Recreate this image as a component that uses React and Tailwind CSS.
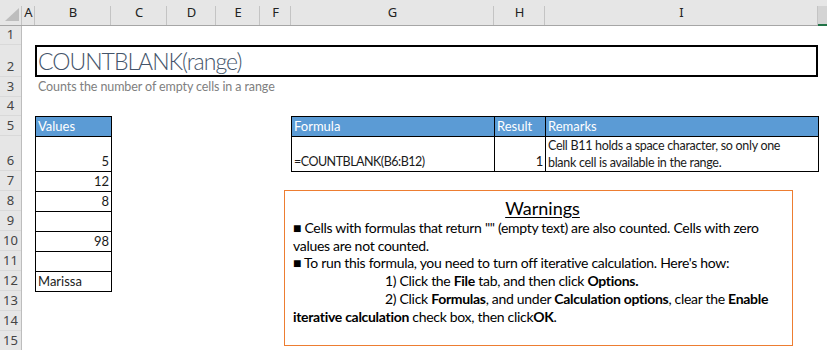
import React from 'react'

const calibri = "font-['Lato','Liberation_Sans',sans-serif]"

const columns = [
  { label: 'A', w: 'w-[13px]' },
  { label: 'B', w: 'w-[76px]' },
  { label: 'C', w: 'w-[56px]' },
  { label: 'D', w: 'w-[49px]' },
  { label: 'E', w: 'w-[44px]' },
  { label: 'F', w: 'w-[31px]' },
  { label: 'G', w: 'w-[203px]' },
  { label: 'H', w: 'w-[51px]' },
  { label: 'I', w: 'w-[273px]' },
]

const rows = [
  { n: 1, h: 'h-[19px]' },
  { n: 2, h: 'h-[32px]' },
  { n: 3, h: 'h-[20px]' },
  { n: 4, h: 'h-[19px]' },
  { n: 5, h: 'h-[20px]' },
  { n: 6, h: 'h-[35px]' },
  { n: 7, h: 'h-[20px]' },
  { n: 8, h: 'h-[20px]' },
  { n: 9, h: 'h-[20px]' },
  { n: 10, h: 'h-[20px]' },
  { n: 11, h: 'h-[20px]' },
  { n: 12, h: 'h-[20px]' },
  { n: 13, h: 'h-[20px]' },
  { n: 14, h: 'h-[20px]' },
  { n: 15, h: 'h-[20px]' },
]

const values = [
  { h: 'h-[35px]', v: '5' },
  { h: 'h-[20px]', v: '12' },
  { h: 'h-[20px]', v: '8' },
  { h: 'h-[20px]', v: '' },
  { h: 'h-[20px]', v: '98' },
  { h: 'h-[20px]', v: '' },
  { h: 'h-[20px]', v: 'Marissa', left: true },
]

function ColumnHeader() {
  return (
    <div className="flex h-[26px] bg-[#e6e6e6] font-['Noto_Sans',sans-serif] text-[13px] text-[#222]">
      {/* corner with the select-all triangle */}
      <div className="relative w-[22px] border-b border-[#a6a6a6]">
        <svg width="22" height="25" className="absolute left-0 top-0">
          <polygon points="5,21 19,21 19,8" fill="#bdbdbd" />
        </svg>
        <div className="absolute right-0 top-[6px] bottom-0 w-px bg-[#c4c4c4]" />
      </div>
      {columns.map(c => (
        <div
          key={c.label}
          className={`relative ${c.w} flex items-center justify-center border-b border-[#a6a6a6] pt-px`}
        >
          {c.label}
          <div className="absolute right-0 top-[6px] bottom-0 w-px bg-[#c4c4c4]" />
        </div>
      ))}
      <div className="flex-1 flex flex-col">
        <div className="h-[6px]" />
        <div className="flex-1 bg-[#d4d4d4]" />
        <div className="h-[2px] bg-[#217346]" />
      </div>
    </div>
  )
}

function RowHeader() {
  return (
    <div className="w-[22px] bg-[#e6e6e6] border-r border-[#bdbdbd] font-['Noto_Sans',sans-serif] text-[13px] text-[#444]">
      {rows.map(r => (
        <div key={r.n} className={`${r.h} flex items-end justify-center pb-px border-b border-[#d9d9d9] leading-none`}>
          <span className="mb-[2px]">{r.n}</span>
        </div>
      ))}
    </div>
  )
}

function ValuesTable() {
  return (
    <div className={`col-start-2 row-start-5 row-span-8 w-[77px] h-[176px] border border-black ${calibri} text-[13px] leading-none text-[#1a1a1a]`}>
      <div className="h-[19px] bg-[#5b9bd5] text-white flex items-end pl-[2px] pb-[3px]">Values</div>
      {values.map((r, i) => (
        <div
          key={i}
          className={`${r.h} border-t border-black flex items-end pb-[3px] ${r.left ? 'justify-start pl-[2px]' : 'justify-end pr-[2px]'}`}
        >
          {r.v}
        </div>
      ))}
    </div>
  )
}

function FormulaTable() {
  return (
    <div className={`col-start-7 col-span-3 row-start-5 row-span-2 w-[528px] h-[56px] border border-black ${calibri} text-[12.5px] tracking-[-0.3px] leading-none text-[#1a1a1a]`}>
      <div className="flex h-[19px] bg-[#5b9bd5] text-white text-[13px] tracking-normal">
        <div className="w-[202px] flex items-end pl-[2px] pb-[3px]">Formula</div>
        <div className="w-[51px] border-l border-black flex items-end pl-[2px] pb-[3px]">Result</div>
        <div className="flex-1 border-l border-black flex items-end pl-[2px] pb-[3px]">Remarks</div>
      </div>
      <div className="flex h-[35px] border-t border-black">
        <div className="w-[202px] flex items-end pl-[2px] pb-[3px] tracking-[-0.5px]">=COUNTBLANK(B6:B12)</div>
        <div className="w-[51px] border-l border-black flex items-end justify-end pr-[2px] pb-[3px] text-[13px]">1</div>
        <div className="flex-1 border-l border-black pl-[2px] leading-[17px] whitespace-nowrap">
          Cell B11 holds a space character, so only one
          <br />
          blank cell is available in the range.
        </div>
      </div>
    </div>
  )
}

function Warnings() {
  return (
    <div className={`absolute left-[284px] top-[190px] w-[509px] h-[156px] border border-[#ed7d31] bg-white pl-[8px] pt-[6px] ${calibri} text-[14px] tracking-[-0.3px] text-black whitespace-nowrap`}>
      <div className="text-center text-[18px] tracking-normal leading-[22px] underline underline-offset-2">Warnings</div>
      <div className="leading-[17.7px]">
        <div>■ Cells with formulas that return "" (empty text) are also counted. Cells with zero</div>
        <div>values are not counted.</div>
        <div>■ To run this formula, you need to turn off iterative calculation. Here's how:</div>
        <div className="pl-[92px]">
          1) Click the <b>File</b> tab, and then click <b>Options.</b>
        </div>
        <div className="pl-[92px]">
          2) Click <b>Formulas</b>, and under <b>Calculation options</b>, clear the <b>Enable</b>
        </div>
        <div>
          <b>iterative calculation</b> check box, then click<b>OK</b>.
        </div>
      </div>
    </div>
  )
}

export default function App() {
  return (
    <div className="relative w-[827px] h-[350px] overflow-hidden bg-white">
      <ColumnHeader />
      <div className="flex">
        <RowHeader />
        <div className="grid grid-cols-[13px_76px_56px_49px_44px_31px_203px_51px_273px] grid-rows-[19px_32px_20px_19px_20px_35px_repeat(9,20px)]">
          {/* title cell */}
          <div className="col-start-2 col-end-10 row-start-2 border-2 border-black flex items-end pl-[1px] pb-[2px] font-['Lato','Liberation_Sans',sans-serif] font-light text-[23px] tracking-[-1px] leading-none text-[#44546a]">
            COUNTBLANK(range)
          </div>
          <div className={`col-start-2 col-end-8 row-start-3 flex items-center pl-[3px] ${calibri} text-[12.5px] tracking-[-0.1px] text-[#808080] whitespace-nowrap`}>
            Counts the number of empty cells in a range
          </div>
          <ValuesTable />
          <FormulaTable />
        </div>
      </div>
      <Warnings />
    </div>
  )
}
